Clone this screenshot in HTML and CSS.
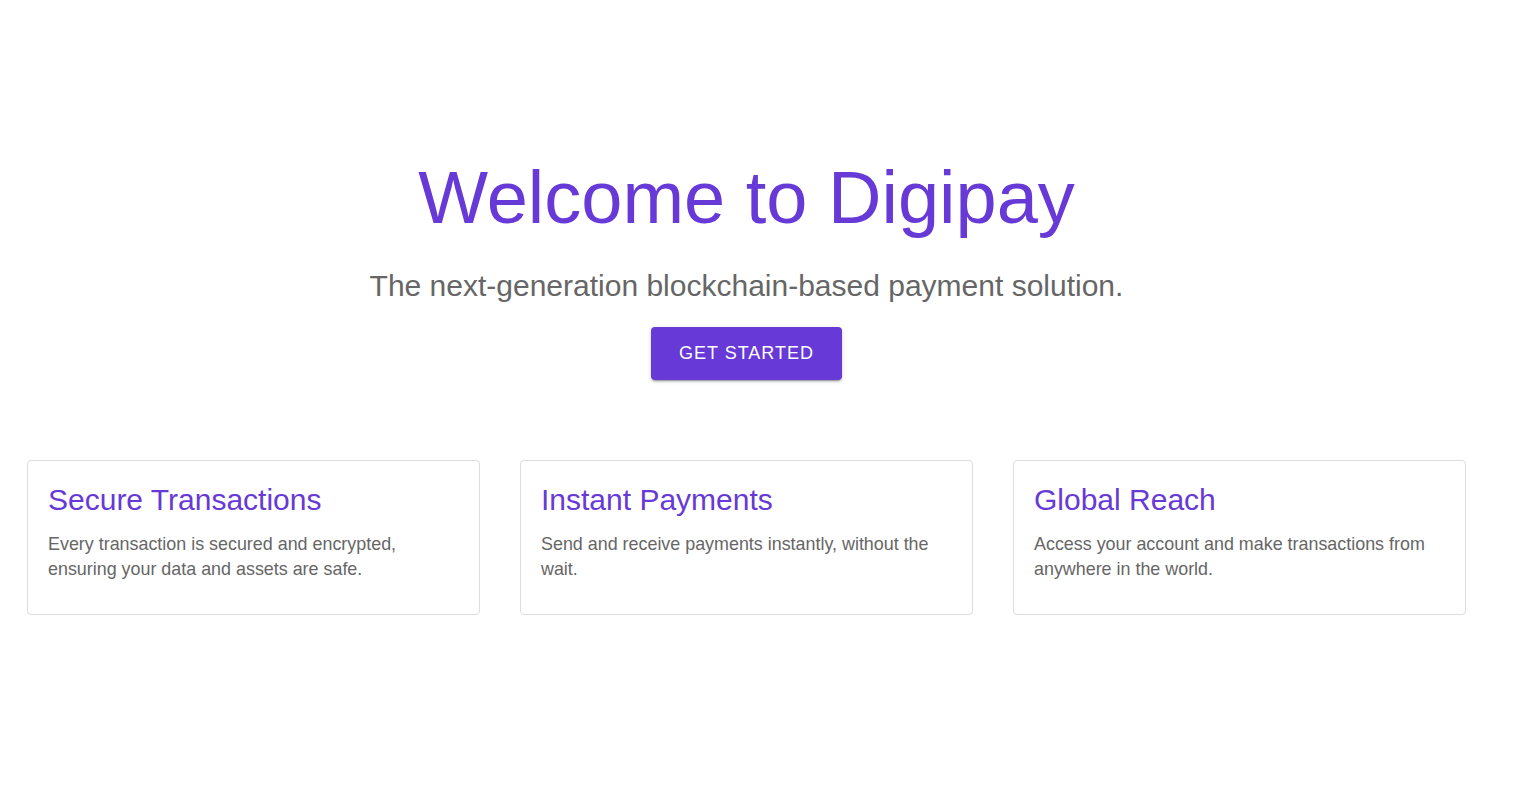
FILE: index.html
```html
<!DOCTYPE html>
<html lang="en">
<head>
<meta charset="utf-8">
<title>Digipay</title>
<link rel="stylesheet" href="styles.css">
</head>
<body>
<main class="page">
  <section class="hero">
    <h1 class="hero-title">Welcome to Digipay</h1>
    <p class="hero-sub">The next-generation blockchain-based payment solution.</p>
    <button class="cta">GET STARTED</button>
  </section>
  <section class="features">
    <div class="card">
      <h2 class="card-title">Secure Transactions</h2>
      <p class="card-text">Every transaction is secured and encrypted, ensuring your data and assets are safe.</p>
    </div>
    <div class="card">
      <h2 class="card-title">Instant Payments</h2>
      <p class="card-text">Send and receive payments instantly, without the wait.</p>
    </div>
    <div class="card">
      <h2 class="card-title">Global Reach</h2>
      <p class="card-text">Access your account and make transactions from anywhere in the world.</p>
    </div>
  </section>
</main>
</body>
</html>
```

FILE: styles.css
```css
* { box-sizing: border-box; }
html, body { margin: 0; padding: 0; background: #fff; }
body { font-family: "Liberation Sans", Arial, sans-serif; }

.page {
  padding: 0 55px 0 27px;
}

.hero {
  display: flex;
  flex-direction: column;
  align-items: center;
  padding-top: 155px;
}

.hero-title {
  margin: 0;
  font-size: 74px;
  font-weight: 400;
  line-height: 1.167;
  color: #6739d6;
}

.hero-sub {
  margin: 25px 0 0;
  font-size: 30px;
  line-height: 1.334;
  color: #666;
}

.cta {
  margin-top: 21px;
  width: 191px;
  height: 53px;
  border: 0;
  border-radius: 4px;
  background: #6739d6;
  color: #fff;
  font-family: "Liberation Sans", Arial, sans-serif;
  font-size: 18px;
  letter-spacing: 1px;
  box-shadow: 0 3px 1px -2px rgba(0,0,0,0.2), 0 2px 2px 0 rgba(0,0,0,0.14), 0 1px 5px 0 rgba(0,0,0,0.12);
  cursor: pointer;
}

.features {
  display: grid;
  grid-template-columns: repeat(3, 1fr);
  gap: 40px;
  margin-top: 80px;
}

.card {
  height: 155px;
  border: 1px solid #ddd;
  border-radius: 4px;
  padding: 19px 20px 20px;
}

.card-title {
  margin: 0;
  font-size: 30px;
  font-weight: 400;
  line-height: 1.3;
  color: #6739d6;
}

.card-text {
  margin: 13px 0 0;
  font-size: 17.9px;
  line-height: 25px;
  color: #666;
}
```
